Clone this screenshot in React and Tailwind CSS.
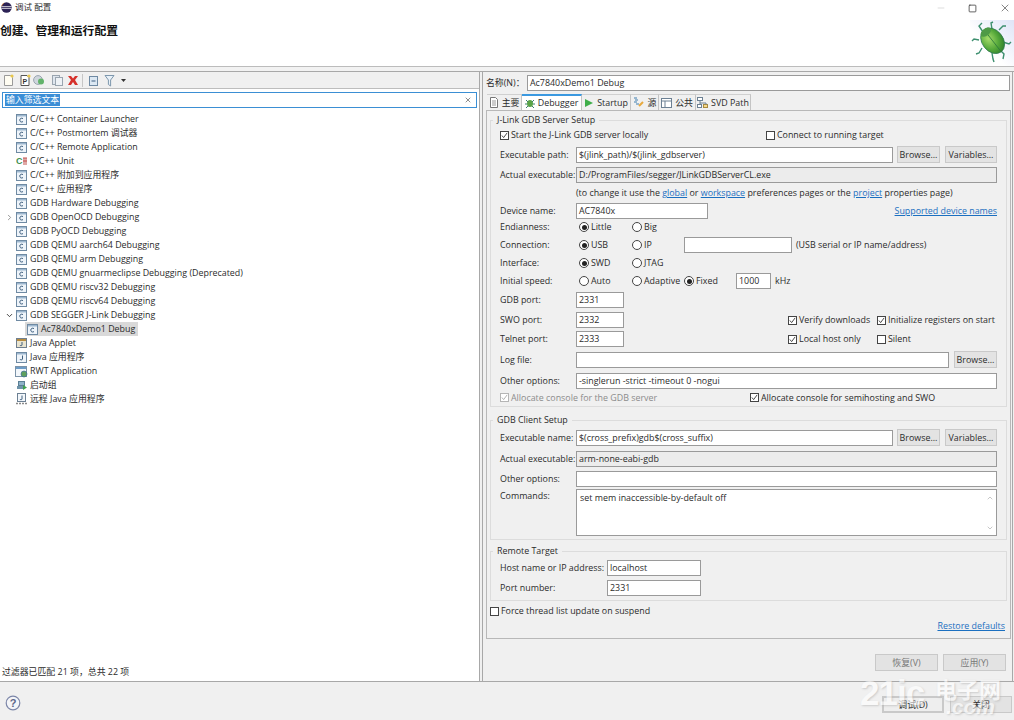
import React from "react";
import { Minus, Square, X, ChevronRight, ChevronDown, ChevronUp } from "lucide-react";

const treeItems = [
  { label: "C/C++ Container Launcher", icon: "c" },
  { label: "C/C++ Postmortem 调试器", icon: "c" },
  { label: "C/C++ Remote Application", icon: "c" },
  { label: "C/C++ Unit", icon: "unit" },
  { label: "C/C++ 附加到应用程序", icon: "c" },
  { label: "C/C++ 应用程序", icon: "c" },
  { label: "GDB Hardware Debugging", icon: "c" },
  { label: "GDB OpenOCD Debugging", icon: "c", arrow: "right" },
  { label: "GDB PyOCD Debugging", icon: "c" },
  { label: "GDB QEMU aarch64 Debugging", icon: "c" },
  { label: "GDB QEMU arm Debugging", icon: "c" },
  { label: "GDB QEMU gnuarmeclipse Debugging (Deprecated)", icon: "c" },
  { label: "GDB QEMU riscv32 Debugging", icon: "c" },
  { label: "GDB QEMU riscv64 Debugging", icon: "c" },
  { label: "GDB SEGGER J-Link Debugging", icon: "c", arrow: "down" },
  { label: "Ac7840xDemo1 Debug", icon: "c", child: true, selected: true },
  { label: "Java Applet", icon: "applet" },
  { label: "Java 应用程序", icon: "j" },
  { label: "RWT Application", icon: "rwt" },
  { label: "启动组", icon: "group" },
  { label: "远程 Java 应用程序", icon: "remote" },
];

function TreeIcon({ type }) {
  if (type === "unit") {
    return (
      <svg width="12" height="12" viewBox="0 0 12 12" className="shrink-0">
        <text x="0" y="9" fontSize="9" fontWeight="700" fill="#3f8f4f" fontFamily="Liberation Sans">C</text>
        <path d="M7 3h4M7 6h4M8 3v7M10 3v7" stroke="#c0504d" strokeWidth="1" fill="none" />
      </svg>
    );
  }
  if (type === "applet") {
    return (
      <svg width="12" height="12" viewBox="0 0 12 12" className="shrink-0">
        <rect x="0.5" y="1.5" width="10" height="9" fill="#e9e4d0" stroke="#6f7f8f" />
        <rect x="1" y="2" width="9" height="2" fill="#b58b3f" />
        <path d="M6 5v3c0 1-2 1-2 0" stroke="#40607f" fill="none" />
      </svg>
    );
  }
  if (type === "rwt") {
    return (
      <svg width="13" height="13" viewBox="0 0 13 13" className="shrink-0 ml-[-1px]">
        <rect x="0.5" y="1.5" width="11" height="10" fill="#f3f7fb" stroke="#7c93a8" />
        <rect x="1" y="2" width="10" height="2" fill="#6d9cc7" />
        <circle cx="9" cy="9" r="3" fill="#5fa05f" stroke="#3f6f9f" strokeWidth="0.7" />
      </svg>
    );
  }
  if (type === "group") {
    return (
      <svg width="12" height="12" viewBox="0 0 12 12" className="shrink-0">
        <rect x="2.5" y="2.5" width="6" height="4" fill="#8fb3c9" stroke="#5b7f95" />
        <rect x="1" y="7" width="7" height="3" fill="#6f93a9" />
        <path d="M7 6l4 2.5-4 2.5z" fill="#3f9f4f" />
      </svg>
    );
  }
  if (type === "remote") {
    return (
      <svg width="12" height="12" viewBox="0 0 12 12" className="shrink-0">
        <rect x="1.5" y="0.5" width="8" height="8" fill="#f3f7fb" stroke="#6c8093" />
        <path d="M6 2.5v3.5c0 1-2 1-2 0" stroke="#40607f" fill="none" />
        <path d="M0 10.5h11" stroke="#8a8a8a" strokeWidth="1.4" strokeDasharray="2 1" />
      </svg>
    );
  }
  return (
    <svg width="11" height="11" viewBox="0 0 11 11" className="shrink-0">
      <rect x="0.5" y="0.5" width="10" height="10" fill="#eef4fa" stroke="#6f8aa3" />
      <rect x="1" y="1" width="9" height="1.5" fill="#9db7cf" />
      {type === "j" ? (
        <path d="M6.5 3.5v3.5c0 1.2-2.5 1.2-2.5 0" stroke="#40607f" fill="none" />
      ) : (
        <path d="M7 4.6c-1.6-1-3.2-.2-3.2 1.5s1.6 2.5 3.2 1.5" stroke="#40607f" fill="none" />
      )}
    </svg>
  );
}

function TreeRow({ item }) {
  return (
    <div className={`flex items-center h-[14px] ${item.child ? "pl-[25px]" : "pl-[5px]"}`}>
      {!item.child && (
        <span className="w-[11px] shrink-0 flex items-center text-[#777]">
          {item.arrow === "right" && <ChevronRight size={9} strokeWidth={2} />}
          {item.arrow === "down" && <ChevronDown size={9} strokeWidth={2.4} className="text-[#333]" />}
        </span>
      )}
      <span className={`flex items-center h-[14px] ${item.selected ? "bg-[#d9d9d9] pl-[2px] pr-[3px]" : ""}`}>
        <span className="w-[14px] shrink-0 flex items-center">
          <TreeIcon type={item.icon} />
        </span>
        <span className="whitespace-nowrap">{item.label}</span>
      </span>
    </div>
  );
}

function Check({ label, checked, disabled, className = "" }) {
  return (
    <div className={`flex items-center whitespace-nowrap ${disabled ? "text-[#8c8c8c]" : ""} ${className}`}>
      <span className={`w-[7px] h-[7px] box-content border ${disabled ? "border-[#b5b5b5]" : "border-[#444]"} bg-white flex items-center justify-center mr-[2px] shrink-0`}>
        {checked && (
          <svg width="7" height="7" viewBox="0 0 8 8" className="shrink-0">
            <path d="M1 4l2 2.4L7 1" stroke={disabled ? "#a8a8a8" : "#333"} strokeWidth="1" fill="none" />
          </svg>
        )}
      </span>
      {label}
    </div>
  );
}

function Radio({ label, checked, className = "" }) {
  return (
    <div className={`flex items-center whitespace-nowrap ${className}`}>
      <span className="w-[8px] h-[8px] box-content rounded-full border border-[#444] bg-white flex items-center justify-center mr-[2px] shrink-0">
        {checked && <span className="w-[5px] h-[5px] rounded-full bg-[#222]" />}
      </span>
      {label}
    </div>
  );
}

function Field({ value = "", className = "", disabled }) {
  return (
    <div className={`h-[16px] min-w-0 flex items-center px-[2px] border border-[#9a9a9a] whitespace-nowrap overflow-hidden ${disabled ? "bg-[#ececec]" : "bg-white"} ${className}`}>
      {value}
    </div>
  );
}

function Btn({ label, className = "" }) {
  return (
    <div className={`h-[17px] shrink-0 flex items-center justify-center bg-[#e3e3e3] border border-[#c9c9c9] whitespace-nowrap ${className}`}>
      {label}
    </div>
  );
}

function Row({ label, className = "", children }) {
  return (
    <div className={`flex items-center ${className}`}>
      <span className="w-[76px] shrink-0 whitespace-nowrap">{label}</span>
      {children}
    </div>
  );
}

function Group({ title, className = "", children }) {
  return (
    <div className={`relative shrink-0 border border-[#dcdcdc] ml-[3px] mr-[3px] pl-[9px] pr-[9px] ${className}`}>
      <span className="absolute left-[2px] top-[-7px] px-[4px] bg-[#f0f0f0] leading-[12px] whitespace-nowrap">{title}</span>
      {children}
    </div>
  );
}

function A({ children }) {
  return <span className="text-[#1b6fc0] underline">{children}</span>;
}

function Tab({ icon, label, active, className = "" }) {
  return (
    <div className={`h-[16px] flex items-center justify-center gap-[3px] border-r border-[#c4c4c4] whitespace-nowrap ${active ? "bg-white border-t-2 border-t-[#3b99e0]" : "bg-[#f0f0f0] border-t border-t-[#d0d0d0]"} ${className}`}>
      {icon}
      {label}
    </div>
  );
}

function Bug() {
  return (
    <svg width="44" height="46" viewBox="0 0 44 46">
      <defs>
        <radialGradient id="shell" cx="40%" cy="35%" r="70%">
          <stop offset="0%" stopColor="#a5dc6a" />
          <stop offset="60%" stopColor="#55a83a" />
          <stop offset="100%" stopColor="#2f7f2c" />
        </radialGradient>
        <linearGradient id="corner" x1="0" y1="1" x2="1" y2="0">
          <stop offset="40%" stopColor="#ffffff" />
          <stop offset="100%" stopColor="#dfe4f7" />
        </linearGradient>
      </defs>
      <rect width="44" height="46" fill="url(#corner)" />
      <g stroke="#3d8f6f" strokeWidth="1.4" fill="none">
        <path d="M13 12L9 6l3-3M22 9l-1-6 2-1M29 10l4-4 3 0M33 22l6 2 2-2M30 30l4 4-1 5M22 33l1 6 1 3M12 28l-3 5-3 1M9 20l-5-1-2 2" />
      </g>
      <g transform="rotate(-38 22 20)">
        <ellipse cx="22" cy="21" rx="10.5" ry="14" fill="url(#shell)" stroke="#2f7a4f" strokeWidth="0.8" />
        <path d="M22 9v26" stroke="#2f7a3c" strokeWidth="0.8" />
        <ellipse cx="22" cy="10" rx="6" ry="3.5" fill="#4f9a46" />
      </g>
    </svg>
  );
}

function EclipseLogo() {
  return (
    <svg width="11" height="11" viewBox="0 0 11 11">
      <circle cx="5.5" cy="5.5" r="5.2" fill="#2c2255" />
      <path d="M0.5 4.6h10M0.5 6.4h10" stroke="#f2f2f2" strokeWidth="0.8" />
      <path d="M0.6 4.2A5.2 5.2 0 0 1 3 1" stroke="#f7941e" strokeWidth="0.6" fill="none" />
    </svg>
  );
}

function Toolbar() {
  return (
    <div className="h-[17px] flex items-center pl-[2px] border-b border-[#bdbdbd] bg-[#f0f0f0]">
      <svg width="132" height="14" viewBox="0 0 132 14">
        <path d="M2.5 2.5h6l2 2v8h-8z" fill="#fffdf2" stroke="#9a9a9a" />
        <circle cx="10" cy="3" r="1.6" fill="#e8c74c" />
        <path d="M19 2.5h6l2 2v8h-8z" fill="#fff" stroke="#555" />
        <text x="20.5" y="11" fontSize="7" fontWeight="700" fill="#333" fontFamily="Liberation Sans">P</text>
        <circle cx="27" cy="3" r="1.6" fill="#e8c74c" />
        <circle cx="36" cy="7" r="4.4" fill="#cfd6dd" stroke="#9aa5b0" />
        <circle cx="39" cy="8.5" r="3" fill="#62b36b" />
        <rect x="50.5" y="2.5" width="7" height="9" fill="#dfe6ee" stroke="#9aa5b0" />
        <rect x="53.5" y="4.5" width="7" height="8" fill="#eef2f6" stroke="#9aa5b0" />
        <path d="M66 3l3 0 2 2.4L73 3h3l-3 4 3 5h-3l-2-3-2 3h-3l3-5z" fill="#d6312b" />
        <path d="M80.5 1v13" stroke="#c6c6c6" />
        <rect x="87.5" y="3.5" width="8" height="9" fill="#dce8f3" stroke="#6f8aa3" />
        <path d="M89.5 8h4" stroke="#3d5f80" />
        <path d="M103 2.5h9l-3.4 4.5v6l-2.2-1.500V7z" fill="#e8f0f7" stroke="#7d97ad" />
        <path d="M119 6h5l-2.500 3z" fill="#333" />
      </svg>
    </div>
  );
}

export default function App() {
  return (
    <div className="w-[1014px] h-[720px] relative overflow-hidden flex flex-col bg-[#f0f0f0] text-[#2b2b2b] text-[8.9px] leading-[14px] font-['Open_Sans','Noto_Sans_CJK_SC',sans-serif]">
      {/* header */}
      <div className="h-[66px] shrink-0 bg-white flex justify-between">
        <div>
          <div className="h-[14px] flex items-center pl-[1px] gap-[3px] text-[8.5px]">
            <EclipseLogo />
            调试 配置
          </div>
          <div className="mt-[9px] text-[11.8px] font-bold text-[#111]">创建、管理和运行配置</div>
        </div>
        <div className="flex flex-col items-end">
          <div className="h-[16px] flex items-center text-[#333]">
            <Minus size={10} strokeWidth={1} className="mr-[22px] text-[#aaa]" />
            <Square size={9} strokeWidth={2} className="mr-[22px]" />
            <X size={12} strokeWidth={1.2} className="mr-[3px]" />
          </div>
          <div className="mt-[4px]">
            <Bug />
          </div>
        </div>
      </div>
      <div className="h-[5px] shrink-0 border-t border-[#bcbcbc] bg-[#f2f2f2]" />

      {/* panels */}
      <div className="h-[610px] shrink-0 flex border-t border-[#a8a8a8]">
        <div className="w-[480px] shrink-0 flex flex-col bg-white border-r border-[#a8a8a8]">
          <Toolbar />
          <div className="mx-[2px] mt-[3px] h-[16px] border border-[#3b8fd4] flex items-center justify-between pl-[2px] pr-[3px]">
            <span className="bg-[#3b8ed6] text-white leading-[12px] px-[1px]">输入筛选文本</span>
            <X size={8} strokeWidth={2} className="text-[#555] mr-[1px]" />
          </div>
          <div className="mt-[3px] pt-[1px]">
            {treeItems.map((item) => (
              <TreeRow key={item.label} item={item} />
            ))}
          </div>
          <div className="mt-auto pl-[2px] pb-[2px] leading-[14px]">过滤器已匹配 21 项，总共 22 项</div>
        </div>

        <div className="w-[2px] shrink-0 bg-[#f0f0f0]" />

        <div className="flex-1 min-w-0 flex flex-col border-l border-r border-[#a8a8a8] mr-[1px] pl-[3px] pr-[1px]">
          <div className="flex items-center h-[16px] mt-[3px]">
            <span className="w-[41px] shrink-0 whitespace-nowrap">名称(N)：</span>
            <Field value="Ac7840xDemo1 Debug" className="flex-1 mr-[1px]" />
          </div>
          <div className="flex mt-[3px] h-[16px] ml-[1px]">
            <Tab label="主要" className="w-[35px]" icon={
              <svg width="10" height="11" viewBox="0 0 10 11"><path d="M1.500.5h5l2 2v8h-7z" fill="#fff" stroke="#777" /><path d="M3 4h4M3 6h4M3 8h4" stroke="#999" /></svg>
            } />
            <Tab active label="Debugger" className="w-[60px]" icon={
              <svg width="10" height="11" viewBox="0 0 10 11"><ellipse cx="5" cy="5.500" rx="3" ry="3.500" fill="#5aa348" /><path d="M1 2l2 2M9 2L7 4M0 6h2M8 6h2M1 10l2-2M9 10L7 8" stroke="#3d7f6f" /></svg>
            } />
            <Tab label="Startup" className="w-[49px]" icon={
              <svg width="10" height="10" viewBox="0 0 10 10"><path d="M1 1l8 4-8 4z" fill="#3fae4a" /></svg>
            } />
            <Tab label="源" className="w-[28px]" icon={
              <svg width="12" height="11" viewBox="0 0 12 11"><path d="M1 1h3M2 3h3M1 5h3M3 7h3" stroke="#3f7fb0" /><path d="M6 9l4-4" stroke="#e8a93c" strokeWidth="2" /></svg>
            } />
            <Tab label="公共" className="w-[37px]" icon={
              <svg width="11" height="10" viewBox="0 0 11 10"><rect x=".5" y=".5" width="10" height="9" fill="#fff" stroke="#6c8093" /><path d="M.5 3h10M4 3v6" stroke="#6c8093" /></svg>
            } />
            <Tab label="SVD Path" className="w-[55px]" icon={
              <svg width="11" height="11" viewBox="0 0 11 11"><rect x=".5" y=".5" width="5" height="3" fill="#fff" stroke="#6c8093" /><rect x=".5" y="7.500" width="4" height="3" fill="#fff" stroke="#6c8093" /><rect x="6.500" y="7.500" width="4" height="3" fill="#f6d98a" stroke="#a88a3f" /><path d="M3 3.500v2.500h6v1.500M3 6v1.500" stroke="#6c8093" fill="none" /></svg>
            } />
          </div>

          {/* tab folder */}
          <div className="h-[529px] border border-[#b8b8b8] flex flex-col">
            <Group title="J-Link GDB Server Setup" className="mt-[9px] h-[287px]">
              <div className="flex items-center h-[16px] mt-[6px]">
                <Check checked label="Start the J-Link GDB server locally" className="w-[266px]" />
                <Check label="Connect to running target" />
              </div>
              <Row label="Executable path:" className="mt-[3px]">
                <Field value="$(jlink_path)/$(jlink_gdbserver)" className="w-[319px]" />
                <Btn label="Browse..." className="w-[43px] ml-[4px]" />
                <Btn label="Variables..." className="w-[52px] ml-[5px]" />
              </Row>
              <Row label="Actual executable:" className="mt-[4px]">
                <Field disabled value="D:/ProgramFiles/segger/JLinkGDBServerCL.exe" className="flex-1" />
              </Row>
              <div className="h-[16px] mt-[2px] ml-[76px] flex items-center whitespace-pre">
                (to change it use the <A>global</A> or <A>workspace</A> preferences pages or the <A>project</A> properties page)
              </div>
              <Row label="Device name:" className="mt-[2px]">
                <Field value="AC7840x" className="w-[132px]" />
                <span className="ml-auto"><A>Supported device names</A></span>
              </Row>
              <Row label="Endianness:" className="mt-[1px] h-[14px]">
                <Radio checked label="Little" className="w-[53px] ml-[3px]" />
                <Radio label="Big" />
              </Row>
              <Row label="Connection:" className="mt-[3px] h-[16px]">
                <Radio checked label="USB" className="w-[53px] ml-[3px]" />
                <Radio label="IP" className="w-[52px]" />
                <Field className="w-[108px]" />
                <span className="ml-[4px] whitespace-nowrap">(USB serial or IP name/address)</span>
              </Row>
              <Row label="Interface:" className="mt-[3px] h-[14px]">
                <Radio checked label="SWD" className="w-[53px] ml-[3px]" />
                <Radio label="JTAG" />
              </Row>
              <Row label="Initial speed:" className="mt-[3px] h-[16px]">
                <Radio label="Auto" className="w-[53px] ml-[3px]" />
                <Radio label="Adaptive" className="w-[52px]" />
                <Radio checked label="Fixed" className="w-[52px]" />
                <Field value="1000" className="w-[35px]" />
                <span className="ml-[4px]">kHz</span>
              </Row>
              <Row label="GDB port:" className="mt-[3px]">
                <Field value="2331" className="w-[48px]" />
              </Row>
              <Row label="SWO port:" className="mt-[4px]">
                <Field value="2332" className="w-[48px]" />
                <Check checked label="Verify downloads" className="ml-[164px] w-[89px]" />
                <Check checked label="Initialize registers on start" />
              </Row>
              <Row label="Telnet port:" className="mt-[3px]">
                <Field value="2333" className="w-[48px]" />
                <Check checked label="Local host only" className="ml-[164px] w-[89px]" />
                <Check label="Silent" />
              </Row>
              <Row label="Log file:" className="mt-[4px]">
                <Field className="flex-1" />
                <Btn label="Browse..." className="w-[43px] ml-[5px]" />
              </Row>
              <Row label="Other options:" className="mt-[5px]">
                <Field value="-singlerun -strict -timeout 0 -nogui" className="flex-1" />
              </Row>
              <div className="flex items-center h-[15px] mt-[1px]">
                <Check checked disabled label="Allocate console for the GDB server" className="w-[250px]" />
                <Check checked label="Allocate console for semihosting and SWO" />
              </div>
            </Group>

            <Group title="GDB Client Setup" className="mt-[13px] h-[120px]">
              <Row label="Executable name:" className="mt-[8px]">
                <Field value="$(cross_prefix)gdb$(cross_suffix)" className="w-[319px]" />
                <Btn label="Browse..." className="w-[43px] ml-[4px]" />
                <Btn label="Variables..." className="w-[52px] ml-[5px]" />
              </Row>
              <Row label="Actual executable:" className="mt-[5px]">
                <Field disabled value="arm-none-eabi-gdb" className="flex-1" />
              </Row>
              <Row label="Other options:" className="mt-[4px]">
                <Field className="flex-1" />
              </Row>
              <div className="flex mt-[2px]">
                <span className="w-[76px] shrink-0">Commands:</span>
                <div className="flex-1 h-[47px] bg-white border border-[#9a9a9a] pl-[3px] pt-[1px] flex justify-between">
                  set mem inaccessible-by-default off
                  <div className="w-[13px] flex flex-col justify-between items-center py-[3px] text-[#aaa]">
                    <ChevronUp size={8} />
                    <ChevronDown size={8} />
                  </div>
                </div>
              </div>
            </Group>

            <Group title="Remote Target" className="mt-[11px] h-[50px]">
              <div className="flex items-center mt-[8px]">
                <span className="w-[107px] shrink-0 whitespace-nowrap">Host name or IP address:</span>
                <Field value="localhost" className="w-[94px]" />
              </div>
              <div className="flex items-center mt-[4px]">
                <span className="w-[107px] shrink-0 whitespace-nowrap">Port number:</span>
                <Field value="2331" className="w-[94px]" />
              </div>
            </Group>

            <Check label="Force thread list update on suspend" className="mt-[3px] ml-[3px] h-[14px]" />
            <div className="mt-[1px] mr-[5px] flex justify-end">
              <A>Restore defaults</A>
            </div>
          </div>

          <div className="flex justify-end gap-[5px] mt-[15px] mr-[5px]">
            <Btn label="恢复(V)" className="w-[63px] bg-[#cccccc] border-[#c4c4c4] text-[#777]" />
            <Btn label="应用(Y)" className="w-[63px] bg-[#cccccc] border-[#c4c4c4] text-[#777]" />
          </div>
        </div>
      </div>

      {/* bottom bar */}
      <div className="flex-1 border-t border-[#a8a8a8] flex items-start justify-between pt-[14px] pr-[2px] pl-[5px]">
        <svg width="16" height="16" viewBox="0 0 16 16" className="mt-[-1px]">
          <circle cx="8" cy="8" r="6.800" fill="#f4f5f8" stroke="#7c86a8" strokeWidth="1.200" />
          <text x="8" y="12" textAnchor="middle" fontSize="11" fontWeight="700" fill="#5c6788" fontFamily="Liberation Sans">?</text>
        </svg>
        <div className="flex gap-[6px]">
          <Btn label="调试(D)" className="w-[62px] border-[#1f7fd0] border-2 bg-[#eeeeee]" />
          <Btn label="关闭" className="w-[62px]" />
        </div>
      </div>

      {/* 21ic watermark */}
      <div className="absolute left-[860px] top-[673px] text-white font-['Liberation_Sans',sans-serif] font-bold text-[35px] leading-[40px] tracking-[-1px] [text-shadow:1px_1px_2px_#b5b5b5] opacity-60 pointer-events-none">
        21ic
      </div>
      <div className="absolute left-[935px] top-[675px] text-white font-['Noto_Sans_CJK_SC',sans-serif] font-bold text-[22px] leading-[26px] [text-shadow:1px_1px_2px_#b5b5b5] opacity-60 pointer-events-none whitespace-nowrap">
        电子网
      </div>
      <div className="absolute left-[946px] top-[695px] text-white font-['Liberation_Sans',sans-serif] font-bold italic text-[21px] leading-[24px] [text-shadow:1px_1px_2px_#b5b5b5] opacity-60 pointer-events-none">
        .com
      </div>
    </div>
  );
}
